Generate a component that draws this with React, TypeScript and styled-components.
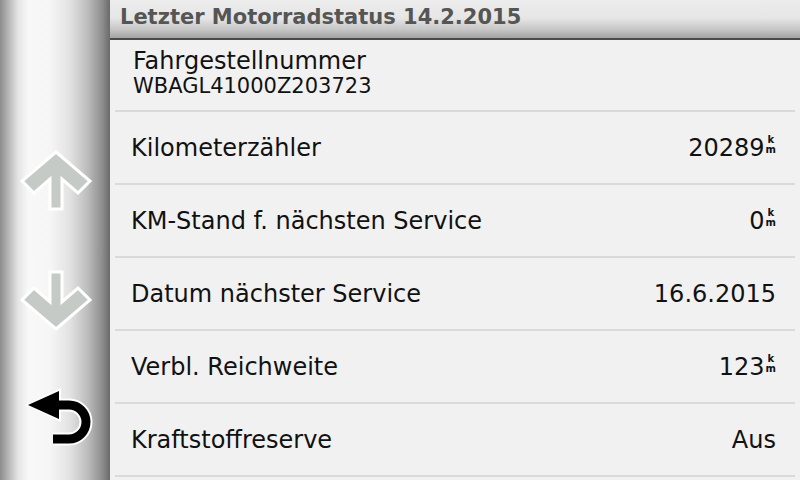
import styled, { createGlobalStyle } from "styled-components"

const GlobalStyle = createGlobalStyle`
  html, body {
    margin: 0;
    padding: 0;
    width: 800px;
    height: 480px;
    overflow: hidden;
    background: #f1f1f1;
  }
  * { box-sizing: border-box; }
`

interface Row {
  label: string;
  value: string;
  km?: boolean;
}

const rows: Row[] = [
  { label: 'Kilometerzähler', value: '20289', km: true },
  { label: 'KM-Stand f. nächsten Service', value: '0', km: true },
  { label: 'Datum nächster Service', value: '16.6.2015' },
  { label: 'Verbl. Reichweite', value: '123', km: true },
  { label: 'Kraftstoffreserve', value: 'Aus' },
];

function UpArrow({ flip }: { flip?: boolean }) {
  return (
    <svg width="80" height="70" viewBox="0 0 80 70" style={flip ? { transform: 'scaleY(-1)' } : undefined}>
      <polygon
        points="40,6 74,35 62,47 46,33 46,63 34,63 34,33 18,47 6,35"
        fill="#c6cac6"
        stroke="#ffffff"
        strokeWidth="3"
        strokeLinejoin="miter"
      />
    </svg>
  );
}

function BackArrow() {
  const tail = "M 36 21 L 50 21 A 17 17 0 0 1 50 55 L 34 55";
  return (
    <svg width="80" height="70" viewBox="0 0 80 70">
      <path d={tail} stroke="#ffffff" strokeWidth="13" fill="none" />
      <polygon points="6,21 42,4 42,38" fill="#ffffff" />
      <path d={tail} stroke="#000" strokeWidth="9" fill="none" />
      <polygon points="9,21 40,7 40,35" fill="#000" />
    </svg>
  );
}

export default function App() {
  return (
    <Screen>
      <GlobalStyle />
      <Sidebar>
        <NavButton><UpArrow /></NavButton>
        <NavButton><UpArrow flip /></NavButton>
        <NavButton $shift={6}><BackArrow /></NavButton>
      </Sidebar>
      <Main>
        <Header>Letzter Motorradstatus 14.2.2015</Header>
        <List>
          <VinRow>
            <VinLabel>Fahrgestellnummer</VinLabel>
            <VinValue>WBAGL41000Z203723</VinValue>
          </VinRow>
          {rows.map((r) => (
            <ItemRow key={r.label}>
              <Label>{r.label}</Label>
              <Value>
                {r.value}
                {r.km && (
                  <Unit>
                    <span>k</span>
                    <span>m</span>
                  </Unit>
                )}
              </Value>
            </ItemRow>
          ))}
        </List>
      </Main>
    </Screen>
  );
}

const Screen = styled.div`
  display: flex;
  width: 800px;
  height: 480px;
  font-family: "DejaVu Sans", "Liberation Sans", sans-serif;
  background: #f1f1f1;
`

const Sidebar = styled.div`
  width: 110px;
  flex-shrink: 0;
  display: flex;
  flex-direction: column;
  padding-top: 116px;
  background: linear-gradient(to right,
    #8c8c8c 0px,
    #b4b4b4 8px,
    #e4e4e4 18px,
    #f8f8f8 28px,
    #f6f6f6 50px,
    #e2e2e2 70px,
    #bcbcbc 88px,
    #8e8e8e 102px,
    #6a6a6a 110px);
`

const NavButton = styled.div<{ $shift?: number }>`
  height: 119px;
  display: flex;
  align-items: flex-start;
  justify-content: center;
  padding-left: ${(p) => 2 + (p.$shift || 0)}px;
  padding-top: 30px;
`

const Main = styled.div`
  flex: 1;
  display: flex;
  flex-direction: column;
  min-width: 0;
`

const Header = styled.div`
  height: 40px;
  padding: 5px 0 0 10px;
  font-weight: bold;
  font-size: 21px;
  color: #555555;
  background: linear-gradient(to bottom, #ececec 0px, #e6e6e6 18px, #c4c4c4 30px, #a6a6a6 37px);
  border-bottom: 2px solid #4a4a4a;
  white-space: nowrap;
`

const List = styled.div`
  display: flex;
  flex-direction: column;
  padding: 0 5px;
`

const VinRow = styled.div`
  height: 72px;
  display: flex;
  flex-direction: column;
  justify-content: center;
  padding: 0 0 4px 18px;
  border-bottom: 2px solid #dadada;
  color: #111;
`

const VinLabel = styled.div`
  font-size: 24px;
  line-height: 27px;
`

const VinValue = styled.div`
  font-size: 21px;
  line-height: 23px;
`

const ItemRow = styled.div`
  height: 73px;
  display: flex;
  align-items: center;
  justify-content: space-between;
  padding: 0 19px 0 16px;
  border-bottom: 2px solid #dadada;
  color: #111;
  font-size: 24px;
`

const Label = styled.span`
  white-space: nowrap;
`

const Value = styled.span`
  display: inline-flex;
  align-items: center;
  white-space: nowrap;
`

const Unit = styled.span`
  display: inline-flex;
  flex-direction: column;
  align-items: center;
  font-size: 10px;
  font-weight: bold;
  line-height: 10px;
  margin-left: 1px;
  margin-top: -5px;
`
